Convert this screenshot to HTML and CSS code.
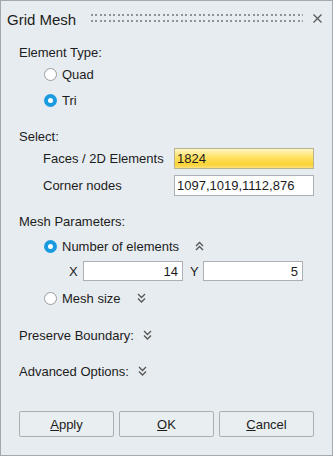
FILE: index.html
```html
<!DOCTYPE html>
<html lang="en">
<head>
<meta charset="UTF-8" />
<title>Grid Mesh</title>
<link rel="stylesheet" href="styles.css">
</head>
<body>

<div class="dialog">
  <div class="titlebar">
    <span class="title">Grid Mesh</span>
    <svg class="grip" height="8">
      <defs>
        <pattern id="dots" width="9" height="6" patternUnits="userSpaceOnUse">
          <rect width="2" height="2" fill="#8d9297"/>
          <rect x="4" width="2" height="2" fill="#8d9297"/>
        </pattern>
      </defs>
      <rect width="100%" height="8" fill="url(#dots)"/>
    </svg>
    <svg class="close" width="9" height="9" viewBox="0 0 9 9">
      <path d="M0.5 0.5 L8.5 8.5 M8.5 0.5 L0.5 8.5" stroke="#555" stroke-width="1.2" fill="none"/>
    </svg>
  </div>

  <div class="content">
    <!-- element type -->
    <div class="row">Element Type:</div>
    <div class="opts">
      <label class="row"><span class="radio"></span>Quad</label>
      <label class="row mt4"><span class="radio on"></span>Tri</label>
    </div>

    <!-- selection -->
    <div class="row section">Select:</div>
    <div class="fields">
      <span>Faces / 2D Elements</span>
      <input class="field hot" value="1824">
      <span>Corner nodes</span>
      <input class="field" value="1097,1019,1112,876">
    </div>

    <!-- mesh parameters -->
    <div class="row section">Mesh Parameters:</div>
    <div class="opts">
      <label class="row mt3"><span class="radio on"></span>Number of elements
        <svg class="chev chev-radio" width="9" height="10" viewBox="0 0 9 10"><path d="M1 5 L4.5 1.5 L8 5 M1 9 L4.5 5.5 L8 9"/></svg>
      </label>
      <div class="row mt3 xy">
        <span class="axis">X</span><input class="field num" value="14">
        <span class="axis axis-y">Y</span><input class="field num" value="5">
      </div>
      <label class="row mt5"><span class="radio"></span>Mesh size
        <svg class="chev chev-radio" width="9" height="10" viewBox="0 0 9 10"><path d="M1 1 L4.5 4.5 L8 1 M1 5.5 L4.5 9 L8 5.5"/></svg>
      </label>
    </div>

    <div class="row section mt15">Preserve Boundary:
      <svg class="chev" width="9" height="10" viewBox="0 0 9 10"><path d="M1 1 L4.5 4.5 L8 1 M1 5.5 L4.5 9 L8 5.5"/></svg>
    </div>
    <div class="row section">Advanced Options:
      <svg class="chev" width="9" height="10" viewBox="0 0 9 10"><path d="M1 1 L4.5 4.5 L8 1 M1 5.5 L4.5 9 L8 5.5"/></svg>
    </div>

    <div class="buttons">
      <button class="btn"><u>A</u>pply</button>
      <button class="btn"><u>O</u>K</button>
      <button class="btn"><u>C</u>ancel</button>
    </div>
  </div>
</div>

</body>
</html>
```

FILE: styles.css
```css
/* base */
* { box-sizing: border-box; }
body { margin: 0; font: 13px "Liberation Sans", Arial, sans-serif; color: #1c1c1c; }

.dialog { width: 333px; height: 456px; border: 1px solid #a4a9ae; background: #e7ecf0; }

/* title bar */
.titlebar { height: 36px; display: flex; align-items: center; padding: 0 10px 0 6px; }
.title    { font-size: 15px; }
.grip     { flex: 1; margin: 0 10px 2px 15px; }
.close    { flex: none; margin-bottom: 2px; }

/* body */
.content  { padding: 4px 18px 0; }
.row      { height: 22px; display: flex; align-items: center; }
.section  { margin-top: 14px; }
.mt3      { margin-top: 3px; }
.mt4      { margin-top: 4px; }
.mt5      { margin-top: 5px; }
.mt15     { margin-top: 15px; }

.opts     { padding-left: 25px; }

.radio    { flex: none; width: 13px; height: 13px; margin-right: 5px;
            border: 1px solid #9c9c9c; border-radius: 50%; background: #fff; }
.radio.on { border: 4px solid #1a9be0; }

.chev       { flex: none; margin-left: 9px; fill: none; stroke: #555; stroke-width: 1.3; }
.chev-radio { margin-left: 16px; }

/* text fields */
.fields   { display: grid; grid-template-columns: 131px minmax(0, 1fr); grid-auto-rows: 22px;
            row-gap: 5px; align-items: center; padding-left: 24px; }
.field    { height: 21px; margin: 0; padding: 0 2px; border: 1px solid #aab0b5;
            background: #fff; font: inherit; color: #1c1c1c; outline: none; }
.fields .field { width: 100%; min-width: 0; }
.field.hot { border-color: #b9b28e;
             background: linear-gradient(#fff6c4 0%, #ffe36a 40%, #fbd334 80%, #fde07a 100%); }

.xy       { padding-left: 25px; }
.axis     { width: 14px; }
.axis-y   { width: 20px; padding-left: 7px; }
.num      { width: 100px; height: 20px; text-align: right; padding-right: 4px; }

/* buttons */
.buttons  { display: grid; grid-template-columns: repeat(3, 1fr); gap: 5px; margin-top: 29px; }
.btn      { height: 26px; border: 1px solid #a9aeb3; border-radius: 2px; background: #e9eef1;
            font: inherit; color: inherit; padding: 0; }
```
